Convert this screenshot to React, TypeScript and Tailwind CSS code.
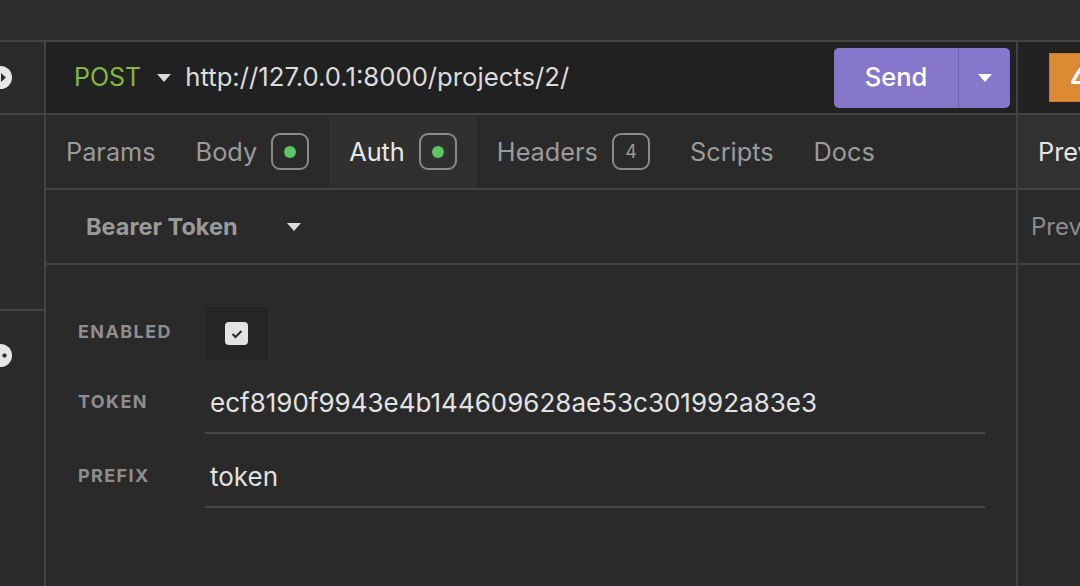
import React from "react";

function Caret({ className }: { className?: string }) {
  return (
    <svg width="14" height="8" viewBox="0 0 14 8" className={className}>
      <path d="M0 0 L14 0 L7 8 Z" fill="currentColor" />
    </svg>
  );
}

function Badge({ children }: { children: React.ReactNode }) {
  return (
    <div className="w-[38px] h-[37px] rounded-[9px] border-[2px] border-[#8a8a8a] flex items-center justify-center text-[18px] text-[#9a9a9a]">
      {children}
    </div>
  );
}

function Dot() {
  return <div className="w-[12px] h-[12px] rounded-full bg-[#5ac466]" />;
}

function Tab({ label, badge, active }: { label: string; badge?: React.ReactNode; active?: boolean }) {
  return (
    <div
      className={`h-full flex items-center gap-[14px] px-5 ${active ? "bg-[#303030] text-[#e8e8e8]" : "text-[#9b9b9b]"}`}
    >
      <span>{label}</span>
      {badge}
    </div>
  );
}

export default function App() {
  return (
    <div
      className="w-[1080px] h-[586px] overflow-hidden bg-[#2a2a2a] flex flex-col"
      style={{ fontFamily: "Inter, 'Noto Sans', sans-serif" }}
    >
      <div className="h-[42px] shrink-0 bg-[#2c2c2c] border-b-[2px] border-[#434343]" />
      <div className="flex flex-1 min-h-0">
        {/* sidebar */}
        <div className="w-[46px] shrink-0 border-r-[2px] border-[#434343] flex flex-col overflow-hidden">
          <div className="h-[73px] shrink-0 border-b-[2px] border-[#434343] flex items-center">
            <div className="-ml-[11px] w-[23px] h-[23px] rounded-full bg-[#e6e6e6] flex items-center justify-center">
              <svg width="23" height="23" viewBox="0 0 23 23">
                <path d="M12 7 L17 11.5 L12 16 Z" fill="#2a2a2a" />
              </svg>
            </div>
          </div>
          <div className="h-[196px] shrink-0 border-b-[2px] border-[#434343]" />
          <div className="pt-[33px] flex">
            <div className="-ml-[11px] w-[23px] h-[23px] rounded-full bg-[#e6e6e6] flex items-center justify-center">
              <svg width="23" height="23" viewBox="0 0 23 23">
                <path d="M15.5 9.5 V13.5 M13.5 11.5 H17.5" stroke="#2a2a2a" strokeWidth="2.4" />
              </svg>
            </div>
          </div>
        </div>

        {/* main */}
        <div className="w-[972px] shrink-0 border-r-[2px] border-[#434343] flex flex-col">
          <div className="h-[73px] shrink-0 bg-[#212121] border-b-[2px] border-[#434343] flex items-center pl-[28px] pr-[6px]">
            <span className="text-[25px] text-[#82b83f]">POST</span>
            <Caret className="ml-[16px] text-[#d8d8d8]" />
            <span className="ml-[14px] text-[25.7px] text-[#dcdcdc] flex-1 whitespace-nowrap">http://127.0.0.1:8000/projects/2/</span>
            <div className="h-[60px] w-[176px] rounded-[5px] bg-[#8677cc] flex items-center text-white">
              <div className="w-[124px] h-full flex items-center justify-center text-[25.5px] font-medium">Send</div>
              <div className="w-px h-full bg-[#6e62aa]" />
              <div className="flex-1 flex items-center justify-center">
                <Caret className="text-white" />
              </div>
            </div>
          </div>
          <div className="h-[75px] shrink-0 border-b-[2px] border-[#434343] flex items-center text-[25.3px]">
            <Tab label="Params" />
            <Tab label="Body" badge={<Badge><Dot /></Badge>} />
            <Tab label="Auth" active badge={<Badge><Dot /></Badge>} />
            <Tab label="Headers" badge={<Badge>4</Badge>} />
            <Tab label="Scripts" />
            <Tab label="Docs" />
          </div>
          <div className="h-[75px] shrink-0 border-b-[2px] border-[#434343] flex items-center pl-[40px]">
            <span className="text-[23.5px] font-bold text-[#9a9a9a]">Bearer Token</span>
            <Caret className="ml-[49px] text-[#dcdcdc]" />
          </div>
          <div className="flex flex-col pt-[42px] pl-[32px] pr-[31px] gap-[13px]">
            <div className="flex items-center">
              <div className="w-[127px] pb-[4px] text-[18px] font-bold tracking-[1.4px] text-[#8e8e8e]">ENABLED</div>
              <div className="w-[63px] h-[53px] bg-[#252525] flex items-center justify-center">
                <div className="w-[23px] h-[23px] rounded-[4px] bg-[#e3e3e3] flex items-center justify-center">
                  <svg width="12" height="10" viewBox="0 0 12 10">
                    <path d="M1.5 5 L4.5 8 L10.5 2" stroke="#2a2a2a" strokeWidth="2" fill="none" />
                  </svg>
                </div>
              </div>
            </div>
            <div className="flex items-center">
              <div className="w-[127px] pb-[4px] text-[18px] font-bold tracking-[1.4px] text-[#8e8e8e]">TOKEN</div>
              <div className="flex-1 h-[61px] border-b-[2px] border-[#474747] flex items-center pl-[5px] text-[26px] text-[#e2e2e2]">
                ecf8190f9943e4b144609628ae53c301992a83e3
              </div>
            </div>
            <div className="flex items-center">
              <div className="w-[127px] pb-[4px] text-[18px] font-bold tracking-[1.4px] text-[#8e8e8e]">PREFIX</div>
              <div className="flex-1 h-[61px] border-b-[2px] border-[#474747] flex items-center pl-[5px] text-[26px] text-[#e2e2e2]">
                token
              </div>
            </div>
          </div>
        </div>

        {/* right */}
        <div className="flex-1 flex flex-col overflow-hidden">
          <div className="h-[73px] shrink-0 bg-[#212121] border-b-[2px] border-[#434343] flex items-center pl-[31px]">
            <div className="h-[49px] w-[60px] shrink-0 bg-[#dd8a35] border border-[#c97a2a] flex items-center pl-[20px] text-[26px] font-bold text-white">
              4
            </div>
          </div>
          <div className="h-[75px] shrink-0 bg-[#313131] border-b-[2px] border-[#434343] flex items-center pl-[20px] text-[25.3px] text-[#e6e6e6] whitespace-nowrap">
            Preview
          </div>
          <div className="h-[75px] shrink-0 border-b-[2px] border-[#434343] flex items-center pl-[13px] text-[24px] text-[#8e8e8e] whitespace-nowrap">
            Preview
          </div>
        </div>
      </div>
    </div>
  );
}
